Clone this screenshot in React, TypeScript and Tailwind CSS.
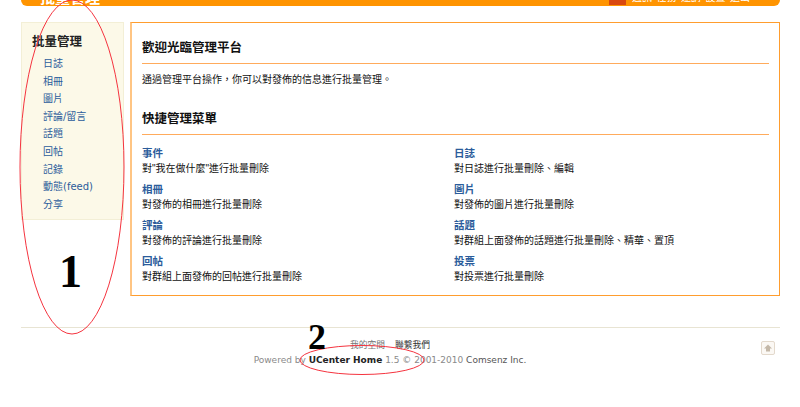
const font = "font-['Liberation_Sans','Noto_Sans_CJK_TC',sans-serif]";

const sideLinks = ['日誌', '相冊', '圖片', '評論/留言', '話題', '回帖', '記錄', '動態(feed)', '分享'];

const actions = [
  { title: '事件', desc: '對"我在做什麼"進行批量刪除' },
  { title: '日誌', desc: '對日誌進行批量刪除、編輯' },
  { title: '相冊', desc: '對發佈的相冊進行批量刪除' },
  { title: '圖片', desc: '對發佈的圖片進行批量刪除' },
  { title: '評論', desc: '對發佈的評論進行批量刪除' },
  { title: '話題', desc: '對群組上面發佈的話題進行批量刪除、精華、置頂' },
  { title: '回帖', desc: '對群組上面發佈的回帖進行批量刪除' },
  { title: '投票', desc: '對投票進行批量刪除' },
];

function Header() {
  return (
    <div className="flex h-[6px] items-end justify-between overflow-hidden rounded-b-[6px] bg-[#ff9400] pl-[19px] pr-[30px]">
      <span className="mb-[1px] shrink-0 text-[15px] font-bold leading-[15px] text-white">批量管理</span>
      <div className="flex shrink-0 items-end gap-[6px]">
        <span className="mb-[1px] h-[14px] w-[17px] bg-[#d9480f]" />
        <div className="mb-[2px] flex shrink-0 gap-[4.5px] text-[10px] leading-[12px] text-white">
          <span>通訊</span>
          <span>任務</span>
          <span>邀請</span>
          <span>設置</span>
          <span>退出</span>
        </div>
      </div>
    </div>
  );
}

function Sidebar() {
  return (
    <div className="h-[198px] w-[103px] shrink-0 border border-[#f3efd6] bg-[#fcf9e8] pl-[10px] pt-[11px]">
      <h2 className="text-[12.5px] font-bold leading-[16px] text-[#222]">批量管理</h2>
      <ul className="mt-[5px] pl-[11px] font-['DejaVu_Sans','Noto_Sans_CJK_TC',sans-serif]">
        {sideLinks.map(link => (
          <li key={link} className="h-[17.6px] text-[10px] leading-[17.6px] text-[#2b5c9b]">
            {link}
          </li>
        ))}
      </ul>
    </div>
  );
}

function Main() {
  return (
    <div className="ml-[6px] h-[274px] w-[650px] border border-l-2 border-[#ff9d2e] border-l-[#ffc583] pl-[10px] pr-[10px] pt-[17px]">
      <h2 className="border-b border-[#ffab5c] pb-[7px] text-[12.5px] font-bold leading-[16px] text-[#111]">
        歡迎光臨管理平台
      </h2>
      <p className="mt-[8px] text-[10px] leading-[16px] text-[#111]">通過管理平台操作，你可以對發佈的信息進行批量管理。</p>
      <h2 className="mt-[23px] border-b border-[#ffab5c] pb-[7px] text-[12.5px] font-bold leading-[16px] text-[#111]">
        快捷管理菜單
      </h2>
      <div className="mt-[10px] grid grid-cols-[312px_1fr]">
        {actions.map(item => (
          <div key={item.title} className="h-[36px]">
            <div className="text-[10.5px] font-bold leading-[16px] text-[#2b5c9b]">{item.title}</div>
            <div className="text-[10px] leading-[16px] text-[#111]">{item.desc}</div>
          </div>
        ))}
      </div>
    </div>
  );
}

function Footer() {
  return (
    <div className="mt-[31px] flex border-t border-[#e8e4d3] pt-[10px]">
      <div className="flex-1 text-center font-['DejaVu_Sans','Noto_Sans_CJK_TC',sans-serif] text-[9px] leading-[15px] text-[#8a8a8a]">
        <div className="flex justify-center gap-[10px] text-[8.75px]">
          <span className="text-[#777]">我的空間</span>
          <span className="text-[#333]">聯繫我們</span>
        </div>
        <div>
          Powered by <b className="text-[#222]">UCenter Home</b> 1.5 © 2001-2010 <span className="text-[#555]">Comsenz Inc.</span>
        </div>
      </div>
      <div className="w-[21px] shrink-0 pl-[2px]">
        <div className="mt-[3px] flex h-[14px] w-[14px] items-center justify-center rounded-[2px] border border-[#e3d9cc] bg-[#fbf8f4]">
          <svg width="8" height="8" viewBox="0 0 8 8">
            <path d="M4 0.5 L8 4.5 H6 V7.5 H2 V4.5 H0 Z" fill="#c4b8a8" />
          </svg>
        </div>
      </div>
    </div>
  );
}

// hand-drawn annotations sitting on top of the screenshot
function Annotations() {
  return (
    <>
      <svg className="pointer-events-none absolute left-0 top-0" width="800" height="407">
        <ellipse cx="72" cy="167" rx="52" ry="167" fill="none" stroke="#f5343f" strokeWidth="1" />
        <ellipse cx="362" cy="360" rx="62" ry="14.5" fill="none" stroke="#f5343f" strokeWidth="1" />
      </svg>
      <span className="absolute left-[59px] top-[247px] font-['Liberation_Serif',serif] text-[46px] font-bold leading-[50px] text-black">
        1
      </span>
      <span className="absolute left-[308px] top-[318px] font-['Liberation_Serif',serif] text-[36px] font-bold leading-[38px] text-black">
        2
      </span>
    </>
  );
}

export default function App() {
  return (
    <div className={`${font} relative h-[407px] w-[800px] overflow-hidden bg-white`}>
      <div className="ml-[21px] w-[759px]">
        <Header />
        <div className="mt-[16px] flex">
          <Sidebar />
          <Main />
        </div>
        <Footer />
      </div>
      <Annotations />
    </div>
  );
}
